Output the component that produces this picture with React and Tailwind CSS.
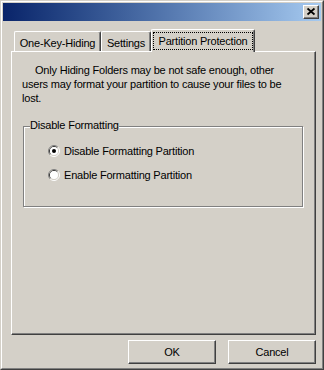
import React from 'react';

const font = "font-['Liberation_Sans',Arial,sans-serif] text-[11px] leading-[14px] tracking-[-0.2px] text-black";

function Radio({ checked }) {
    return (
        <svg width="12" height="12" viewBox="0 0 12 12" className="shrink-0">
            <path d="M2.11 9.89 A5.5 5.5 0 0 1 9.89 2.11" fill="none" stroke="#808080" strokeWidth="1" />
            <path d="M9.89 2.11 A5.5 5.5 0 0 1 2.11 9.89" fill="none" stroke="#ffffff" strokeWidth="1" />
            <path d="M2.82 9.18 A4.5 4.5 0 0 1 9.18 2.82" fill="none" stroke="#404040" strokeWidth="1" />
            <path d="M9.18 2.82 A4.5 4.5 0 0 1 2.82 9.18" fill="none" stroke="#d4d0c8" strokeWidth="1" />
            <circle cx="6" cy="6" r="4" fill="#ffffff" />
            {checked && <circle cx="6" cy="6" r="2" fill="#000000" />}
        </svg>
    );
}

function Tab({ label, width, selected }) {
    if (selected) {
        return (
            <div
                className="relative z-10 -mb-px h-[23px] bg-[#d4d0c8] border-l border-t border-r border-l-white border-t-white border-r-[#404040] rounded-t-[2px] shadow-[inset_-1px_0_0_#808080] pt-[2px] px-[1px] pb-[2px]"
                style={{ width }}
            >
                <div className="h-full w-full border border-dotted border-black flex items-center justify-center">
                    {label}
                </div>
            </div>
        );
    }
    return (
        <div
            className="h-[20px] bg-[#d4d0c8] border-l border-t border-r border-l-white border-t-white border-r-[#404040] rounded-t-[2px] shadow-[inset_-1px_0_0_#808080] flex items-center justify-center pt-[2px]"
            style={{ width }}
        >
            {label}
        </div>
    );
}

function Button({ children }) {
    return (
        <button className="w-[88px] h-[24px] bg-[#d4d0c8] border border-l-white border-t-white border-r-[#404040] border-b-[#404040] shadow-[inset_-1px_-1px_0_#808080] flex items-center justify-center">
            {children}
        </button>
    );
}

export default function App() {
    return (
        <div className={`w-[324px] h-[370px] bg-[#d4d0c8] border border-l-[#d4d0c8] border-t-[#d4d0c8] border-r-[#404040] border-b-[#404040] ${font}`}>
            <div className="h-full border border-l-white border-t-white border-r-[#808080] border-b-[#808080] p-px flex flex-col">
                {/* title bar */}
                <div className="h-[18px] shrink-0 bg-gradient-to-r from-[#0a246a] to-[#a6caf0] flex items-center justify-end pr-[2px]">
                    <div className="relative w-[16px] h-[14px] bg-[#d4d0c8] border border-l-white border-t-white border-r-[#404040] border-b-[#404040] shadow-[inset_-1px_-1px_0_#808080]">
                        <svg width="16" height="14" viewBox="0 0 16 14" className="absolute -left-px -top-px">
                            <path d="M4.5 3.5 L11.5 9.5 M11.5 3.5 L4.5 9.5" stroke="#000" strokeWidth="1.7" />
                        </svg>
                    </div>
                </div>

                {/* content */}
                <div className="flex-1 flex flex-col pl-[8px] pr-[5px] pt-[8px]">
                    <div className="h-[22px] flex items-end pl-[3px]">
                        <Tab label="One-Key-Hiding" width={87} />
                        <Tab label="Settings" width={50} />
                        <Tab label="Partition Protection" width={104} selected />
                    </div>

                    <div className="h-[284px] border border-l-white border-t-white border-r-[#404040] border-b-[#404040] shadow-[inset_-1px_-1px_0_#808080] pt-[11px] pl-[10px]">
                        <p className="indent-[13px]">
                            Only Hiding Folders may be not safe enough, other
                            <br />
                            users may format your partition to cause your files to be
                            <br />
                            lost.
                        </p>

                        <div className="relative ml-[1px] mt-[21px] w-[280px] h-[81px] border border-[#808080] shadow-[inset_1px_1px_0_#ffffff,1px_1px_0_#ffffff] pt-[17px] pl-[24px] flex flex-col gap-[10px]">
                            <span className="absolute top-[-9px] left-[6px] bg-[#d4d0c8]">Disable Formatting</span>
                            <label className="flex items-center gap-[4px]">
                                <Radio checked />
                                <span>Disable Formatting Partition</span>
                            </label>
                            <label className="flex items-center gap-[4px]">
                                <Radio />
                                <span>Enable Formatting Partition</span>
                            </label>
                        </div>
                    </div>

                    <div className="mt-[5px] flex justify-end gap-[12px]">
                        <Button>OK</Button>
                        <Button>Cancel</Button>
                    </div>
                </div>
            </div>
        </div>
    );
}
